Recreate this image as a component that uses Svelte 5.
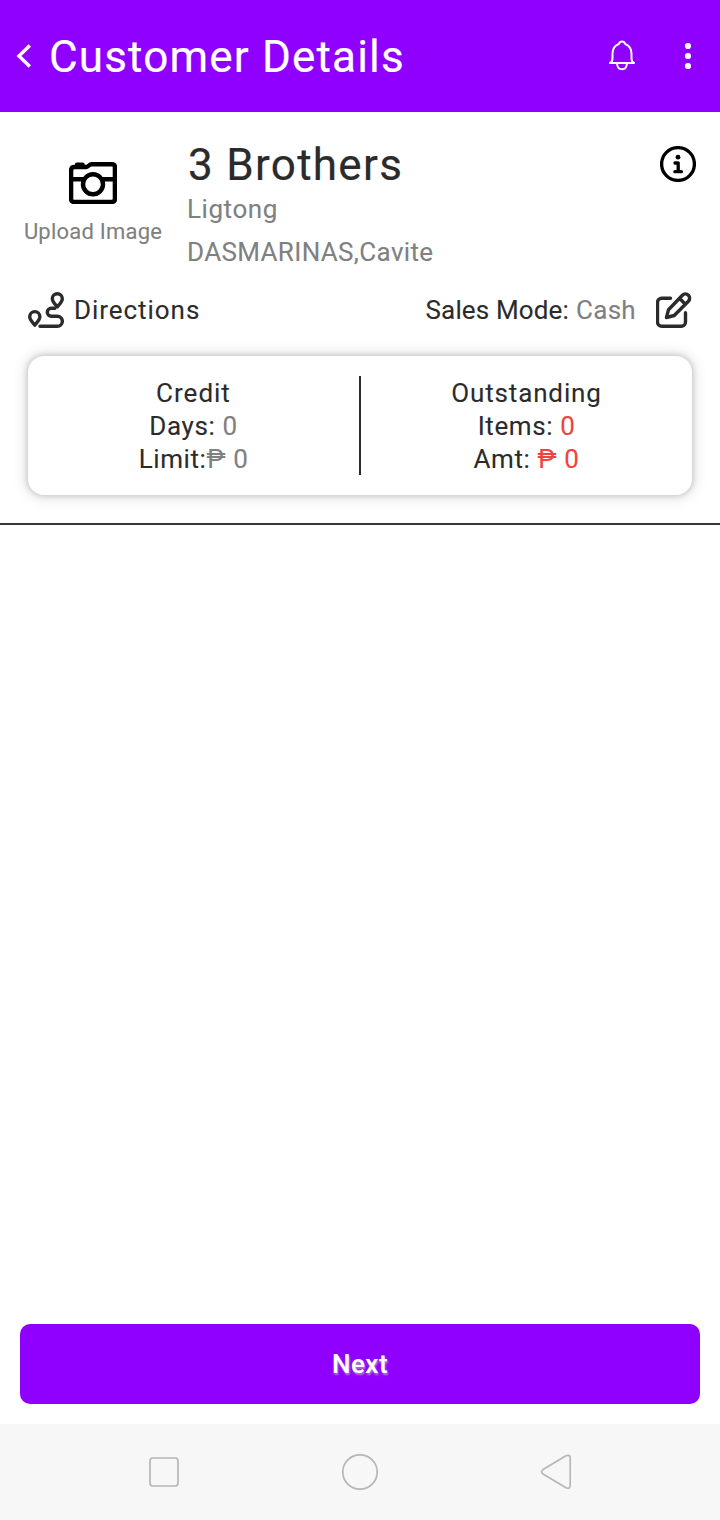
<script lang="ts">
	const customer = {
		name: '3 Brothers',
		street: 'Ligtong',
		city: 'DASMARINAS,Cavite',
		salesMode: 'Cash',
		creditDays: 0,
		creditLimit: 0,
		outstandingItems: 0,
		outstandingAmount: 0
	};
</script>

<div class="screen">
	<header class="appBar">
		<svg class="back" width="16" height="24" viewBox="0 0 16 24">
			<path d="M13.800 1.500 3 12l10.800 10.500" />
		</svg>
		<h1>Customer Details</h1>
		<svg class="bell" width="28" height="32" viewBox="0 0 28 32">
			<path d="M2 23h24c-2-1-2.500-2.400-2.500-4.500V14c0-5-2.600-8.600-6.300-10C16.600 2.300 15.600 1.500 14 1.500S11.400 2.300 10.800 4C7.100 5.400 4.500 9 4.500 14v4.500C4.500 20.600 4 22 2 23z" />
			<path d="M9 23.500c.3 3.700 2 5.800 5 5.800s4.700-2.100 5-5.800" />
		</svg>
		<svg class="more" width="8" height="28" viewBox="0 0 8 28">
			<circle cx="4" cy="4" r="3.100" />
			<circle cx="4" cy="14" r="3.100" />
			<circle cx="4" cy="24" r="3.100" />
		</svg>
	</header>

	<section class="profile">
		<div class="upload">
			<svg width="48" height="42" viewBox="0 0 48 42">
				<path d="M2.100 37V8.500q0-3.500 3.500-3.500H17c2 0 3.500-2.800 5.500-2.800H43q2.900 0 2.900 2.900V37q0 2.900-2.900 2.900H5q-2.900 0-2.900-2.900z" />
				<path d="M8 2.600h5.500M3 17.200h11M34 17.200h11" />
				<circle cx="24" cy="22.300" r="10" />
			</svg>
			<span>Upload Image</span>
		</div>
		<div class="who">
			<h2>{customer.name}</h2>
			<p class="street">{customer.street}</p>
			<p class="city">{customer.city}</p>
		</div>
		<svg class="info" width="36" height="36" viewBox="0 0 36 36">
			<circle cx="18" cy="18" r="16.400" />
			<path d="M15 17h3.200v8.700M14.900 25.700h6.500" />
			<circle class="dot" cx="18" cy="11.200" r="2.400" />
		</svg>
	</section>

	<section class="actions">
		<svg class="route" width="36" height="36" viewBox="0 0 36 36">
			<path d="M29.300 14.800c-2.300-2.700-5-5-5-8.100a5 5 0 0 1 10 0c0 3.100-2.700 5.400-5 8.100z" />
			<path d="M6.800 33.100c-2.300-2.900-5.100-5.400-5.100-8.400a5.100 5.100 0 0 1 10.200 0c0 3-2.800 5.500-5.100 8.400z" />
			<path d="M27 16.200h-3.700a4 4 0 0 0 0 8h6a5 5 0 0 1 0 10.100H12" />
		</svg>
		<span class="directions">Directions</span>
		<span class="mode">Sales Mode:</span>
		<span class="cash">{customer.salesMode}</span>
		<svg class="edit" width="36" height="36" viewBox="0 0 36 36">
			<path d="M14.500 6.200H5.700a4.200 4.200 0 0 0-4.200 4.200V30a4.200 4.200 0 0 0 4.200 4.200h19.600a4.200 4.200 0 0 0 4.200-4.200v-9.200" />
			<path d="M10.500 25.500l2-7.800L26.400 3.300a4.100 4.100 0 0 1 6 6L18.200 23.500zM24.200 7l4.700 4.700" />
		</svg>
	</section>

	<section class="card">
		<div class="column">
			<p class="credit">Credit</p>
			<p>Days: <span>{customer.creditDays}</span></p>
			<p>Limit:<span><b>₱</b> {customer.creditLimit}</span></p>
		</div>
		<div class="divider"></div>
		<div class="column due">
			<p class="outstanding">Outstanding</p>
			<p>Items: <span>{customer.outstandingItems}</span></p>
			<p>Amt: <span><b>₱</b> {customer.outstandingAmount}</span></p>
		</div>
	</section>

	<main></main>

	<button class="next">Next</button>

	<nav>
		<svg width="36" height="36" viewBox="0 0 36 36">
			<rect x="4" y="4" width="28" height="28" rx="3" />
		</svg>
		<svg width="36" height="36" viewBox="0 0 36 36">
			<circle cx="18" cy="18" r="17.200" />
		</svg>
		<svg width="36" height="36" viewBox="0 0 36 36">
			<path d="M5 15.600 28 1.800Q32.200 0 32.200 4.500V31Q32.200 35.500 28 33.800L5 20Q2 17.800 5 15.600z" />
		</svg>
	</nav>
</div>

<style>
	:global(body) {
		margin: 0;
		background: #fff;
	}

	.screen {
		display: flex;
		flex-direction: column;
		width: 720px;
		height: 1520px;
		font-family: Roboto, 'Liberation Sans', sans-serif;
		font-size: 26px;
		color: #2b2b2b;
		background: #fff;
		white-space: nowrap;
		-webkit-text-stroke: 0.1px currentColor;
	}

	h1,
	h2,
	p {
		margin: 0;
		font-weight: 400;
	}

	svg {
		flex: none;
		fill: none;
		stroke-linecap: round;
		stroke-linejoin: round;
	}

	.appBar {
		display: flex;
		align-items: center;
		box-sizing: border-box;
		height: 112px;
		padding: 0 28px 0 16px;
		background: #9000ff;
		color: #fff;
	}

	.back {
		stroke: #fff;
		stroke-width: 3.4;
		stroke-linecap: butt;
		stroke-linejoin: miter;
	}

	h1 {
		flex: 1;
		margin-left: 17px;
		padding-top: 2px;
		font-size: 44px;
		letter-spacing: 1.17px;
		-webkit-text-stroke-width: 0.2px;
	}

	.bell {
		margin-right: 48px;
		stroke: #fff;
		stroke-width: 2;
	}

	.more {
		fill: #fff;
	}

	.profile {
		display: flex;
		height: 162px;
		padding: 0 24px;
	}

	.upload {
		display: flex;
		flex-direction: column;
		align-items: center;
		width: 138px;
		margin: 50px 25px 0 0;
		font-size: 22px;
		line-height: 30px;
		letter-spacing: 0.22px;
		color: #808080;
	}

	.upload svg {
		margin-bottom: 13px;
		stroke: #000;
		stroke-width: 4.4;
	}

	.who {
		flex: 1;
		padding-top: 30px;
		line-height: 43px;
		color: #808080;
	}

	h2 {
		margin-left: 1px;
		font-size: 44px;
		line-height: 46px;
		letter-spacing: 1.3px;
		color: #2b2b2b;
		-webkit-text-stroke-width: 0.2px;
	}

	.street {
		letter-spacing: 0.55px;
	}

	.city {
		letter-spacing: 0.35px;
	}

	.info {
		margin-top: 34px;
		stroke: #000;
		stroke-width: 3.3;
	}

	.dot {
		fill: #000;
		stroke: none;
	}

	.actions {
		display: flex;
		align-items: center;
		height: 36px;
		margin: 18px 28px 0;
	}

	.route,
	.edit {
		stroke: #2b2b2b;
		stroke-width: 3.4;
	}

	.directions {
		margin: 0 auto 0 10px;
		letter-spacing: 0.95px;
	}

	.mode {
		margin-right: 7px;
		letter-spacing: 0.15px;
	}

	.cash {
		margin-right: 20px;
		letter-spacing: 0.3px;
		color: #808080;
	}

	.card {
		display: flex;
		margin: 28px 28px 0;
		padding: 20px 0;
		border-radius: 16px;
		background: #fff;
		box-shadow:
			0 0 6px rgba(0, 0, 0, 0.24),
			0 0 12px 6px rgba(0, 0, 0, 0.07);
		line-height: 33px;
	}

	.column {
		flex: 1;
		padding-top: 1px;
		margin-bottom: -1px;
		text-align: center;
		letter-spacing: 0.6px;
	}

	.credit {
		letter-spacing: 1px;
	}

	.outstanding {
		letter-spacing: 0.85px;
	}

	.column span {
		color: #808080;
	}

	.due span {
		color: #ee443f;
	}

	b {
		font-weight: 400;
	}

	.divider {
		width: 2px;
		background: #2b2b2b;
	}

	main {
		flex: 1;
		margin-top: 28px;
		border-top: 2px solid #37353a;
	}

	.next {
		height: 80px;
		margin: 0 20px 20px;
		padding: 0;
		border: 0;
		border-radius: 10px;
		background: #9000ff;
		color: #fff;
		font: 500 26px/80px Roboto, 'Liberation Sans', sans-serif;
		letter-spacing: 0.5px;
		text-shadow: 1px 2px 2px rgba(190, 190, 190, 0.7);
	}

	nav {
		display: flex;
		align-items: center;
		justify-content: space-between;
		height: 96px;
		padding: 0 146px;
		background: #f7f7f7;
	}

	nav svg {
		stroke: #b7b7b7;
		stroke-width: 1.7;
	}
</style>
